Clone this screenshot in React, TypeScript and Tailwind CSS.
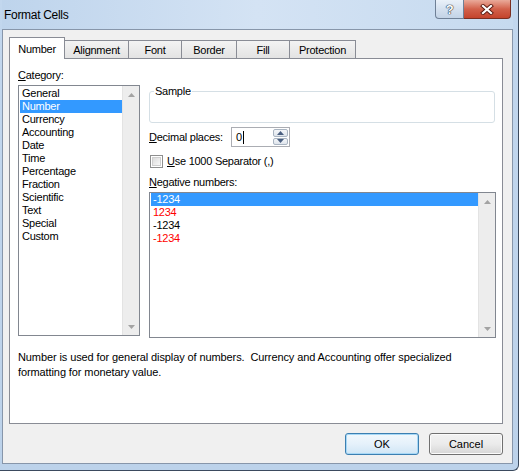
import React from "react";

const categories = [
  "General",
  "Number",
  "Currency",
  "Accounting",
  "Date",
  "Time",
  "Percentage",
  "Fraction",
  "Scientific",
  "Text",
  "Special",
  "Custom",
];

const negatives = [
  { label: "-1234", red: false },
  { label: "1234", red: true },
  { label: "-1234", red: false },
  { label: "-1234", red: true },
];

const tabs = [
  { name: "Number", w: "w-[56px]" },
  { name: "Alignment", w: "w-[64px]" },
  { name: "Font", w: "w-[53px]" },
  { name: "Border", w: "w-[55px]" },
  { name: "Fill", w: "w-[53px]" },
  { name: "Protection", w: "w-[66px]" },
];

function ArrowUp() {
  return (
    <svg width="7" height="4" viewBox="0 0 7 4">
      <path d="M0 4 L3.5 0 L7 4 Z" fill="#a3a3a3" />
    </svg>
  );
}

function ArrowDown() {
  return (
    <svg width="7" height="4" viewBox="0 0 7 4">
      <path d="M0 0 L3.5 4 L7 0 Z" fill="#a3a3a3" />
    </svg>
  );
}

// vertical scrollbar with only the two arrow buttons (nothing to scroll)
function ScrollBar() {
  return (
    <div className="flex w-[17px] flex-col justify-between border-l border-[#e3e3e3] bg-[#ededed]">
      <div className="flex h-[17px] items-center justify-center">
        <ArrowUp />
      </div>
      <div className="flex h-[17px] items-center justify-center">
        <ArrowDown />
      </div>
    </div>
  );
}

export default function App() {
  return (
    <div className="h-[471px] w-[519px] overflow-hidden font-['Liberation_Sans',Arial,sans-serif] text-[11px] tracking-[-0.25px] text-black">
      <div className="flex h-full w-full flex-col rounded-br-[6px] border-r border-b border-[#3b4a5e] bg-gradient-to-b from-[#c2d7ee] to-[#bcd2ea] pb-[6px] pl-[2px] pr-[5px]">
        {/* title bar */}
        <div className="flex h-[29px] items-start bg-gradient-to-r from-[#bed4ec] via-[#d4e3f4] to-[#c6daef]">
          <div className="pl-[2px] pt-[8px] text-[12px] leading-[14px] tracking-[-0.3px]">Format Cells</div>
          <div className="ml-auto mr-[2px] flex">
            <div className="flex h-[19px] w-[29px] items-center justify-center rounded-bl-[4px] border border-t-0 border-[#6f8096] bg-gradient-to-b from-[#eaf1f9] via-[#d5e1ef] to-[#c3d3e6] text-[13px] font-bold leading-none text-white [text-shadow:0_0_1px_#203040,0_0_1px_#203040,0_0_1px_#203040]">
              ?
            </div>
            <div className="flex h-[19px] w-[47px] items-center justify-center rounded-br-[4px] border border-l-0 border-t-0 border-[#7b2f22] bg-gradient-to-b from-[#e9aa9a] via-[#d2614b] to-[#c4432c]">
              <svg width="14" height="11" viewBox="0 0 14 11">
                <path d="M3 2 L11 9 M11 2 L3 9" stroke="#5a1a10" strokeWidth="4" strokeLinecap="square" />
                <path d="M3 2 L11 9 M11 2 L3 9" stroke="#ffffff" strokeWidth="2.2" strokeLinecap="square" />
              </svg>
            </div>
          </div>
        </div>

        {/* client area */}
        <div className="flex flex-1 flex-col border border-[#8796aa] bg-[#f0f0f0]">
          {/* tab strip */}
          <div className="ml-[6px] mt-[7px] flex h-[21px] items-end">
            {tabs.map((t, i) =>
              i === 0 ? (
                <div
                  key={t.name}
                  className={`relative z-10 -mb-px flex h-[22px] ${t.w} items-center justify-center border-x border-t border-[#898c95] bg-white pt-[1px]`}
                >
                  {t.name}
                </div>
              ) : (
                <div
                  key={t.name}
                  className={`flex h-[18px] ${t.w} items-center justify-center border-r border-t border-[#898c95] bg-gradient-to-b from-[#f3f3f3] to-[#e3e3e3] pt-[1px]`}
                >
                  {t.name}
                </div>
              )
            )}
          </div>

          {/* tab panel */}
          <div className="ml-[6px] flex h-[366px] w-[494px] flex-col border border-[#898c95] bg-white pl-[8px]">
            <div className="flex gap-[9px]">
              {/* category column */}
              <div className="flex w-[122px] flex-col pt-[10px]">
                <div className="leading-[13px]">
                  <span className="underline">C</span>ategory:
                </div>
                <div className="mt-[3px] flex h-[251px] border border-[#828790] pl-[1px]">
                  <div className="flex w-[102px] flex-col pt-[1px]">
                    {categories.map((c) => (
                      <div
                        key={c}
                        className={`h-[13px] pl-[2px] leading-[13px] ${c === "Number" ? "bg-[#3399ff] text-white" : ""}`}
                      >
                        {c}
                      </div>
                    ))}
                  </div>
                  <ScrollBar />
                </div>
              </div>

              {/* options column */}
              <div className="flex w-[347px] flex-col pt-[26px]">
                <fieldset className="w-[346px] rounded-[3px] border border-[#d5dfe5] pl-[4px]">
                  <legend className="px-[1px] leading-[13px]">Sample</legend>
                  <div className="h-[24px]" />
                </fieldset>

                <div className="mt-[4px] flex items-center">
                  <div className="w-[82px] leading-[13px]">
                    <span className="underline">D</span>ecimal places:
                  </div>
                  <div className="flex h-[20px] w-[59px] border border-[#abadb3]">
                    <div className="flex flex-1 items-center pl-[4px]">
                      <span className="leading-[13px]">0</span>
                      <span className="ml-[1px] h-[13px] w-px bg-black" />
                    </div>
                    <div className="flex w-[16px] flex-col gap-px py-[1px] pr-[1px]">
                      <div className="flex flex-1 items-center justify-center rounded-[2px] border border-[#a9b4c1] bg-gradient-to-b from-[#f4f6f9] to-[#dfe5ec]">
                        <svg width="7" height="4" viewBox="0 0 7 4">
                          <path d="M0 4 L3.5 0 L7 4 Z" fill="#4a5f80" />
                        </svg>
                      </div>
                      <div className="flex flex-1 items-center justify-center rounded-[2px] border border-[#a9b4c1] bg-gradient-to-b from-[#f4f6f9] to-[#dfe5ec]">
                        <svg width="7" height="4" viewBox="0 0 7 4">
                          <path d="M0 0 L3.5 4 L7 0 Z" fill="#4a5f80" />
                        </svg>
                      </div>
                    </div>
                  </div>
                </div>

                <div className="mt-[8px] flex h-[13px] items-center">
                  <div className="ml-[1px] h-[13px] w-[13px] border border-[#8e8f8f] bg-white p-px">
                    <div className="h-full w-full border border-[#cfcfcf] bg-gradient-to-br from-[#dcdcdc] to-[#f8f8f8]" />
                  </div>
                  <div className="ml-[4px] leading-[13px]">
                    <span className="underline">U</span>se 1000 Separator (,)
                  </div>
                </div>

                <div className="mt-[8px] leading-[13px]">
                  <span className="underline">N</span>egative numbers:
                </div>
                <div className="mt-[3px] flex h-[146px] border border-[#828790] pl-[1px]">
                  <div className="flex flex-1 flex-col">
                    {negatives.map((n, i) => (
                      <div
                        key={i}
                        className={`h-[13px] pl-[2px] leading-[13px] ${
                          i === 0 ? "bg-[#3399ff] text-white" : n.red ? "text-[#ff0000]" : ""
                        }`}
                      >
                        {n.label}
                      </div>
                    ))}
                  </div>
                  <ScrollBar />
                </div>
              </div>
            </div>

            <p className="mt-[12px] leading-[15px] tracking-[-0.1px]">
              Number is used for general display of numbers.&nbsp; Currency and Accounting offer specialized
              <br />
              formatting for monetary value.
            </p>
          </div>

          {/* dialog buttons */}
          <div className="ml-[342px] mt-[9px] flex gap-[10px]">
            <button className="h-[22px] w-[74px] rounded-[3px] border border-[#3c7fb1] bg-gradient-to-b from-[#f2f8fc] via-[#e5f1fb] to-[#d0e6f5] shadow-[inset_0_0_0_1px_#a7d8f6] tracking-normal">
              OK
            </button>
            <button className="h-[22px] w-[74px] rounded-[3px] border border-[#707070] bg-gradient-to-b from-[#f2f2f2] via-[#ebebeb] to-[#d6d6d6] shadow-[inset_0_0_0_1px_#fbfbfb] tracking-normal">
              Cancel
            </button>
          </div>
        </div>
      </div>
    </div>
  );
}
